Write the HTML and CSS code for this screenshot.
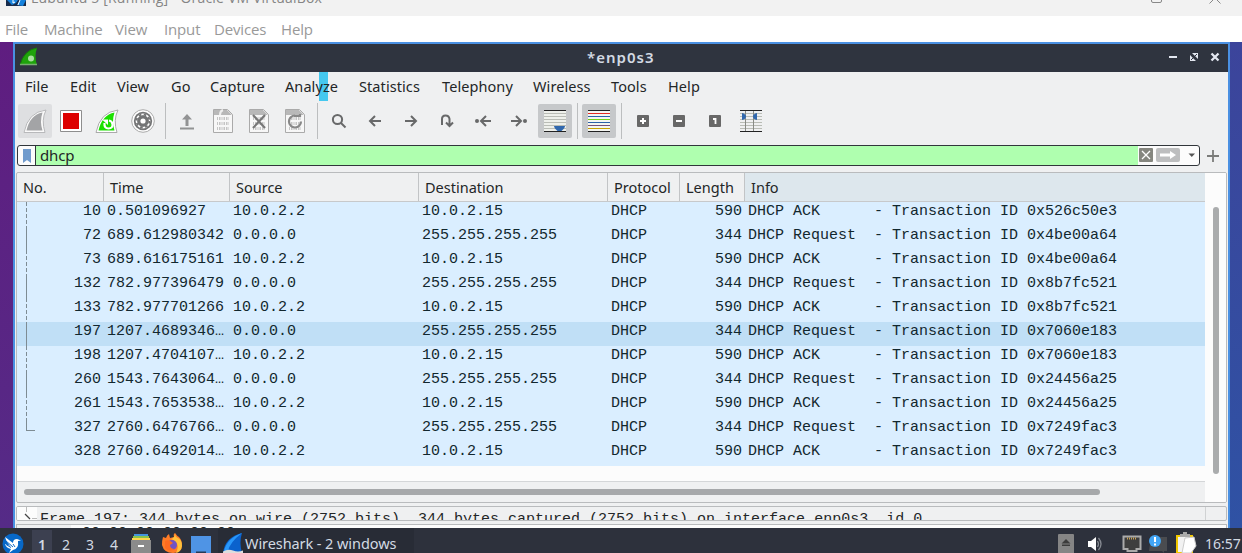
FILE: index.html
```html
<!DOCTYPE html>
<html lang="en">
<head>
<meta charset="utf-8">
<title>Wireshark in VirtualBox</title>
<link rel="stylesheet" href="styles.css">
</head>
<body>
<div class="screen">
  <header class="host-title">
    <svg class="host-logo" width="20" height="7" viewBox="0 0 20 7"><path d="M0 0h20v6H0z" fill="#182c4c"/><path d="M1 0l5 5 4-2 2-3zM11 5l6 1 3-6h-6z" fill="#1683de"/><path d="M7 0v3l2-1M14 0l-2 5" stroke="#fff" fill="none"/></svg>
    <span class="host-name">Lubuntu 5 [Running] - Oracle VM VirtualBox</span>
    <svg class="host-controls" width="92" height="4" viewBox="0 0 92 4" fill="none" stroke="#888"><path d="M1.500 0v1q0 1.500 1.500 1.500h7q1.500 0 1.500-1.500v-1"/><path d="M59.500 3.500l4-4M70.500 3.500l-4-4"/></svg>
  </header>
  <nav class="host-menu"><span>File</span><span>Machine</span><span>View</span><span>Input</span><span>Devices</span><span>Help</span></nav>

  <div class="desktop">
    <section class="window">
      <div class="titlebar">
        <svg class="title-logo" width="20" height="20" viewBox="0 0 20 20"><path d="M1 18Q5 3 18 1q-3 8 0 17z" fill="#1fa30b"/><path d="M1 18Q5 3 18 1" fill="none" stroke="#158007"/><path d="M1 17.500h17" stroke="#77ae70" stroke-width="1.500"/><circle cx="12" cy="11.500" r="3" fill="#a9dea0"/></svg>
        <span class="title-text">*enp0s3</span>
        <svg class="title-controls" width="56" height="12" viewBox="0 0 56 12"><path d="M1 5h8" stroke="#e3e7f0" stroke-width="2"/><path d="M24 1h6v6zM22 3v6h6z" fill="#e3e7f0"/><path d="M23 8l6-6" stroke="#2f343f"/><path d="M43.500 1.500l7 7M50.500 1.500l-7 7" stroke="#e3e7f0" stroke-width="2.300"/></svg>
      </div>
      <nav class="app-menu"><span>File</span><span>Edit</span><span>View</span><span>Go</span><span>Capture</span><span class="analyze">Analyze</span><span>Statistics</span><span>Telephony</span><span>Wireless</span><span>Tools</span><span>Help</span></nav>

      <div class="toolbar">
        <span class="tool faint"><svg width="24" height="24" viewBox="0 0 24 24"><path d="M1 23.500Q5 3 23 1q-5 10-1 22.500z" fill="#fafafa" stroke="#b8b9bb"/><path d="M3.500 21.500Q7 6 19.500 3.500q-3 9 0 18z" fill="#a3a4a6"/></svg></span>
        <span class="tool"><svg width="22" height="22" viewBox="0 0 22 22"><path d="M.5.5h21v21H.5z" fill="#fff" stroke="#8e8e8e"/><path d="M3 3h16v16H3z" fill="#d00"/></svg></span>
        <span class="tool"><svg width="24" height="24" viewBox="0 0 24 24"><path d="M1 23.500Q5 3 23 1q-5 10-1 22.500z" fill="#fff" stroke="#aaa"/><path d="M3.500 21.500Q7 6 19.500 3.500q-3 9 0 18z" fill="#1be000"/><path d="M9.500 14q-.5 5.500 4 5.500t4-4.500q-.5-3-3.500-3.500" fill="none" stroke="#fff" stroke-width="2.200"/><path d="M7 10.500h6v5.500z" fill="#fff"/></svg></span>
        <span class="tool"><svg width="24" height="24" viewBox="0 0 24 24"><circle cx="12" cy="12" r="11.300" fill="#fff" stroke="#aaa"/><circle cx="12" cy="12" r="9.200" fill="#737475"/><circle cx="12" cy="12" r="6.500" fill="none" stroke="#fff" stroke-width="1.800"/><circle cx="12" cy="12" r="6.500" fill="none" stroke="#737475" stroke-width="1.800" stroke-dasharray="2.600 2.505"/><circle cx="12" cy="12" r="4" fill="none" stroke="#737475" stroke-width="3.400"/><circle cx="12" cy="12" r="2.600" fill="#fff"/></svg></span>
        <i class="separator"></i>
        <span class="tool"><svg width="16" height="18" viewBox="0 0 16 18" fill="#929394"><path d="M8 2l5 5.500H9.500V14h-3V7.500H3zM1 15.500h14v2H1z"/></svg></span>
        <span class="tool"><svg class="doc" width="20" height="24" viewBox="0 0 20 24"><path d="M.5.500h14l5 5v18H.5z" fill="#f7f7f7" stroke="#aaa"/><path d="M1 1h13v5H1zM14 1v5h5z" fill="#b8b8b8"/><path d="M7 6q0-4 3-5" stroke="#eee" stroke-width="2" fill="none"/><path d="M4 9.500h12M4 14.500h12M4 19.500h12" stroke="#c5c5c5" stroke-width="3" stroke-dasharray="1 1 1 .5"/></svg></span>
        <span class="tool"><svg class="doc" width="20" height="24" viewBox="0 0 20 24"><path d="M.5.500h14l5 5v18H.5z" fill="#f7f7f7" stroke="#aaa"/><path d="M1 1h13v5H1zM14 1v5h5z" fill="#b8b8b8"/><path d="M4 9.500h12M4 14.500h12M4 19.500h12" stroke="#c5c5c5" stroke-width="3" stroke-dasharray="1 1 1 .5"/><path d="M4 6l12 13M16 6L4 19" stroke="#777" stroke-width="2.200"/></svg></span>
        <span class="tool"><svg class="doc" width="20" height="24" viewBox="0 0 20 24"><path d="M.5.500h14l5 5v18H.5z" fill="#f7f7f7" stroke="#aaa"/><path d="M1 1h13v5H1zM14 1v5h5z" fill="#b8b8b8"/><path d="M4 9.500h12M4 14.500h12M4 19.500h12" stroke="#c5c5c5" stroke-width="3" stroke-dasharray="1 1 1 .5"/><path d="M10 6.500a6 6 0 1 0 6 6M9 7h6v-2" stroke="#888" stroke-width="2.200" fill="none"/></svg></span>
        <i class="separator"></i>
        <span class="tool"><svg width="16" height="16" viewBox="0 0 16 16" fill="none" stroke="#68696a" stroke-width="2"><circle cx="6.500" cy="6.500" r="4.600"/><path d="M10 10l4.500 4.500"/></svg></span>
        <span class="tool"><svg width="16" height="16" viewBox="0 0 16 16" fill="none" stroke="#68696a" stroke-width="2"><path d="M14 8H3M8 3L3 8l5 5"/></svg></span>
        <span class="tool"><svg width="16" height="16" viewBox="0 0 16 16" fill="none" stroke="#68696a" stroke-width="2"><path d="M2 8h11M8 3l5 5-5 5"/></svg></span>
        <span class="tool"><svg width="16" height="16" viewBox="0 0 16 16" fill="none" stroke="#68696a" stroke-width="2"><path d="M3 12V6q0-3.500 3.500-3.500T10.500 6v6M7 9.500l3.500 3.500L14 9.500"/></svg></span>
        <span class="tool"><svg width="18" height="16" viewBox="0 0 18 16" fill="none" stroke="#68696a" stroke-width="2"><path d="M17 8H7M12 3L7 8l5 5"/><circle cx="3" cy="8" r="2" fill="#68696a" stroke="none"/></svg></span>
        <span class="tool"><svg width="18" height="16" viewBox="0 0 18 16" fill="none" stroke="#68696a" stroke-width="2"><path d="M1 8h10M6 3l5 5-5 5"/><circle cx="15" cy="8" r="2" fill="#68696a" stroke="none"/></svg></span>
        <span class="tool pressed"><svg width="22" height="22" viewBox="0 0 22 22"><path d="M0 0h22v22H0z" fill="#eef0eb"/><path d="M0 3.500h22M0 6.500h22M0 9.500h22M0 12.500h22M0 15.500h22M0 18.500h22" stroke="#b9bcb5"/><path d="M0 .5h22M0 21.500h22" stroke="#222"/><path d="M10 16h11q0 2-3.500 5h-4Q10 18 10 16z" fill="#3168ad"/></svg></span>
        <i class="separator"></i>
        <span class="tool pressed"><svg width="22" height="22" viewBox="0 0 22 22"><path d="M0 0h22v22H0z" fill="#f4f5f1"/><path d="M0 .5h22M0 21.500h22" stroke="#222"/><path d="M0 3.500h22" stroke="#e32b23"/><path d="M0 6.500h22M0 12.500h22" stroke="#2b62a8"/><path d="M0 9.500h22" stroke="#73d216"/><path d="M0 15.500h22" stroke="#75507b"/><path d="M0 18.500h22" stroke="#c8a000"/></svg></span>
        <i class="separator"></i>
        <span class="tool"><svg width="12" height="12" viewBox="0 0 12 12"><rect width="12" height="12" rx="1" fill="#686868"/><path d="M3 6h6M6 3v6" stroke="#fff" stroke-width="2"/></svg></span>
        <span class="tool"><svg width="12" height="12" viewBox="0 0 12 12"><rect width="12" height="12" rx="1" fill="#686868"/><path d="M3 6h6" stroke="#fff" stroke-width="2"/></svg></span>
        <span class="tool"><svg width="12" height="12" viewBox="0 0 12 12"><rect width="12" height="12" rx="1" fill="#686868"/><path d="M4 4h2.500v5" fill="none" stroke="#fff" stroke-width="1.800"/></svg></span>
        <span class="tool"><svg width="22" height="22" viewBox="0 0 22 22"><path d="M0 3.500h22M0 6.500h22M0 9.500h22M0 12.500h22M0 15.500h22M0 18.500h22" stroke="#b9bcb5"/><path d="M0 .5h22M0 21.500h22" stroke="#222"/><path d="M5.500 1v20M13.500 1v20" stroke="#888a85"/><path d="M2 3q4 1 4 3.500T2 10zM17 3q-4 1-4 3.500t4 3.500z" fill="#3168ad"/></svg></span>
      </div>

      <div class="filter-row">
        <div class="filter">
          <span class="bookmark"><svg width="8" height="14" viewBox="0 0 8 14"><path d="M0 0h8v14l-4-3-4 3z" fill="#709bcd"/></svg></span>
          <span class="filter-text">dhcp</span>
          <span class="filter-actions"><svg width="62" height="19" viewBox="0 0 62 19"><rect x="1" y="2" width="14" height="14" rx="1" fill="#85867f"/><path d="M4 5l8 8M12 5l-8 8" stroke="#fff" stroke-width="1.300"/><rect x="18" y="2" width="24" height="14" rx="2" fill="#bdbebf"/><path d="M22 7.500h10V5l6 4-6 4v-2.500H22z" fill="#fff"/><path d="M50.500 7.500h6.500l-3.200 3.500z" fill="#555"/></svg></span>
        </div>
        <svg class="plus" width="12" height="12" viewBox="0 0 12 12"><path d="M0 6h12M6 0v12" stroke="#7b7c7a" stroke-width="1.800"/></svg>
      </div>

      <div class="packets">
        <div class="packet-main">
          <div class="head cols"><b>No.</b><b>Time</b><b>Source</b><b>Destination</b><b>Protocol</b><b>Length</b><b class="info-head">Info</b></div>
          <div class="rows">
            <div class="row cols dashed"><span>10</span><span>0.501096927</span><span>10.0.2.2</span><span>10.0.2.15</span><span>DHCP</span><span>590</span><span>DHCP ACK      - Transaction ID 0x526c50e3</span></div>
            <div class="row cols solid"><span>72</span><span>689.612980342</span><span>0.0.0.0</span><span>255.255.255.255</span><span>DHCP</span><span>344</span><span>DHCP Request  - Transaction ID 0x4be00a64</span></div>
            <div class="row cols dashed"><span>73</span><span>689.616175161</span><span>10.0.2.2</span><span>10.0.2.15</span><span>DHCP</span><span>590</span><span>DHCP ACK      - Transaction ID 0x4be00a64</span></div>
            <div class="row cols solid"><span>132</span><span>782.977396479</span><span>0.0.0.0</span><span>255.255.255.255</span><span>DHCP</span><span>344</span><span>DHCP Request  - Transaction ID 0x8b7fc521</span></div>
            <div class="row cols dashed"><span>133</span><span>782.977701266</span><span>10.0.2.2</span><span>10.0.2.15</span><span>DHCP</span><span>590</span><span>DHCP ACK      - Transaction ID 0x8b7fc521</span></div>
            <div class="row cols solid selected"><span>197</span><span>1207.4689346…</span><span>0.0.0.0</span><span>255.255.255.255</span><span>DHCP</span><span>344</span><span>DHCP Request  - Transaction ID 0x7060e183</span></div>
            <div class="row cols dashed"><span>198</span><span>1207.4704107…</span><span>10.0.2.2</span><span>10.0.2.15</span><span>DHCP</span><span>590</span><span>DHCP ACK      - Transaction ID 0x7060e183</span></div>
            <div class="row cols solid"><span>260</span><span>1543.7643064…</span><span>0.0.0.0</span><span>255.255.255.255</span><span>DHCP</span><span>344</span><span>DHCP Request  - Transaction ID 0x24456a25</span></div>
            <div class="row cols dashed"><span>261</span><span>1543.7653538…</span><span>10.0.2.2</span><span>10.0.2.15</span><span>DHCP</span><span>590</span><span>DHCP ACK      - Transaction ID 0x24456a25</span></div>
            <div class="row cols last"><span>327</span><span>2760.6476766…</span><span>0.0.0.0</span><span>255.255.255.255</span><span>DHCP</span><span>344</span><span>DHCP Request  - Transaction ID 0x7249fac3</span></div>
            <div class="row cols"><span>328</span><span>2760.6492014…</span><span>10.0.2.2</span><span>10.0.2.15</span><span>DHCP</span><span>590</span><span>DHCP ACK      - Transaction ID 0x7249fac3</span></div>
          </div>
          <div class="hscroll"><i></i></div>
        </div>
        <div class="vscroll"><i></i></div>
      </div>
      <div class="details"><span class="branch"><svg width="20" height="13" viewBox="0 0 20 13" fill="none"><path d="M9.500 0v5M15 11.500h5" stroke="#bbb"/><path d="M8 7l5 5" stroke="#444" stroke-width="1.300"/></svg></span><span class="frame-text">Frame 197: 344 bytes on wire (2752 bits), 344 bytes captured (2752 bits) on interface enp0s3, id 0</span><i class="details-edge"></i></div>
      <div class="bytes"><span class="offset"></span><span class="hex">00 00 00 00 00 00</span></div>
    </section>
  </div>

  <footer class="taskbar">
    <span class="launcher"><svg width="22" height="22" viewBox="0 0 22 22"><circle cx="11" cy="11" r="10.500" fill="#0768c8"/><path d="M3 4l8 6q0-4 4-4l4 1.500-3 .5q1 8-5 9l-4 3 2-4q-5-1-6-5l5 2q-4-4-5-9z" fill="#fff"/><path d="M4 8l7 6M4 11.500l5 3M11 11l2 3" stroke="#0768c8"/></svg></span>
    <span class="desk active">1</span><span class="desk">2</span><span class="desk">3</span><span class="desk">4</span>
    <span class="quick"><svg width="20" height="19" viewBox="0 0 20 19"><path d="M3 0h14v3H3z" fill="#4394dd"/><path d="M2 2h16v3H2z" fill="#8ac34a"/><path d="M1 4h18v4H1z" fill="#ffd54f"/><rect y="6" width="20" height="14" fill="#8b8b8b"/><path d="M7 12h6" stroke="#fff" stroke-width="2"/></svg></span>
    <span class="quick fox"><svg width="22" height="20" viewBox="0 0 22 20"><path d="M2 4l3 1q1-3 3-4l1 4 4-1q-1-3 1-4 2 3 4 4 3 3 3 8 0 8-9 8T1 12q0-5 1-8z" fill="#ff7b26"/><path d="M14 0q0 4 3 5 4 2 4 8-1 6-6 7 5-10-5-14 4-1 4-6z" fill="#ffc23c"/><circle cx="11" cy="12" r="5" fill="#7053c5"/><path d="M4 8q4-2 8 2l-3 2q0 4 5 4-6 4-10-1z" fill="#ff6b20"/></svg></span>
    <span class="quick show-desktop"><svg width="20" height="17" viewBox="0 0 20 17"><path d="M0 0h20v17H0z" fill="#4f94e5"/><path d="M5 15.500h10V17H5z" fill="#263a56"/></svg></span>
    <span class="task"><svg width="22" height="20" viewBox="0 0 22 20"><path d="M1 20Q3 4 20 0q-3 9 0 20z" fill="#0b62cd"/><path d="M2 18Q5 5 20 0 8 9 6 18z" fill="#2998fa"/><path d="M1 18.500q5-3 10-1t10 0V20H1z" fill="#ddd"/></svg><span class="task-text">Wireshark - 2 windows</span></span>
    <span class="tray"><svg width="146" height="23" viewBox="0 0 146 23"><rect x="4" y="4" width="16" height="20" rx="1" fill="#858585"/><path d="M12 9l4.500 4.500h-9zM8 14.500h8v1.500H8z" fill="#3c3c3c"/><path d="M34 11h3l5-4v14l-5-4h-3z" fill="#fff"/><path d="M43.500 11q2 3 0 6M44.500 8q5 6 0 12" stroke="#858991" fill="none" stroke-width="1.300"/><path d="M69.500 6.500h17V19h-4v2h-9v-2h-4z" fill="#3e3e3e" stroke="#aaa" stroke-width="2"/><path d="M73 8.500h10" stroke="#c8a45b" stroke-width="2" stroke-dasharray="1 1"/><path d="M97 7h16v14h-3v2l-2-2H95z" fill="#4a4c50"/><circle cx="101" cy="11" r="6" fill="#42a5f5"/><path d="M101 7v5M101 13.500v2" stroke="#fff" stroke-width="2"/><path d="M123 6h15v17h-15z" fill="#f2f2f2" stroke="#f2c800" stroke-width="2"/><path d="M126 4h3V2h4v2h3v3h-10z" fill="#aaa"/><path d="M131 8l9-1 2 9-5 7h-9z" fill="#fff" stroke="#ccc"/></svg></span>
    <span class="clock">16:57</span>
  </footer>
</div>
</body>
</html>
```
FILE: styles.css
```css
* { box-sizing: border-box; }
body { margin: 0; width: 1242px; height: 553px; overflow: hidden; font-family: "Noto Sans", sans-serif; }
svg { display: block; flex: none; }
.screen { width: 1242px; height: 553px; overflow: hidden; display: flex; flex-direction: column; }
.host-title { height: 16px; flex: none; background: #f2f2f2; display: flex; align-items: flex-start; padding-left: 6px; overflow: hidden; }
.host-name { font: 14px/20px "Open Sans", sans-serif; color: #858585; margin: -12px 0 0 5px; width: 1120px; letter-spacing: .18px; white-space: nowrap; }
.host-menu { height: 26px; flex: none; background: #fff; display: grid; grid-template-columns: 39px 71px 49px 50px 67px auto; padding-left: 5px; font: 15px/27px "Open Sans", sans-serif; letter-spacing: -.15px; color: #999; }
.desktop { height: 486px; flex: none; padding: 0 12px 0 13px; background: linear-gradient(#5f1d80, #552b87) 0 0 / 50% 100% no-repeat, linear-gradient(#3c449b, #2f52a4) 100% 0 / 50% 100% no-repeat; }
.window { width: 1217px; height: 486px; overflow: hidden; background: #eff0f1; border: solid #4a90e2; border-width: 2px 2px 0; display: flex; flex-direction: column; }
.titlebar { height: 28px; flex: none; background: #2f343f; display: flex; align-items: center; }
.title-logo { margin: -2px 0 0 4px; }
.title-text { width: 1129px; padding-left: 548px; font-size: 15px; font-weight: 600; letter-spacing: 1px; color: #d3dae3; line-height: 24px; margin-top: -3px; }
.app-menu { height: 29px; flex: none; display: grid; grid-template-columns: 45px 47px 54px 39px 75px 74px 83px 91px 78px 57px auto; padding-left: 10px; font-size: 14.500px; line-height: 29px; letter-spacing: .08px; color: #232627; }
.analyze { background: linear-gradient(#45c8ef, #45c8ef) 34px 0 / 9px 29px no-repeat; }
.toolbar { height: 40px; flex: none; display: flex; padding: 3px 0 0 2px; }
.tool { width: 34px; height: 34px; margin: 0 1px; display: flex; align-items: center; justify-content: center; border-radius: 2px; flex: none; }
.faint { background: #dedfe1; }
.pressed { background: #c6c8ca; }
.separator { width: 8px; height: 36px; margin-top: -1px; background: linear-gradient(#bcbebf, #bcbebf) 4px 0 / 1px 36px no-repeat; flex: none; }
.filter-row { height: 31px; flex: none; display: flex; padding: 4px 0 0 2px; }
.filter { width: 1183px; height: 21px; display: flex; border: 1px solid #31363b; border-radius: 3px; background: #fcfcfc; overflow: hidden; }
.bookmark { width: 18px; flex: none; border-right: 1px solid #31363b; display: flex; align-items: center; justify-content: center; }
.filter-text { width: 1102px; flex: none; background: #afffaf; padding-left: 4px; font-size: 15px; line-height: 18px; color: #232627; letter-spacing: -.15px; }
.plus { margin: 5px 0 0 7px; }
.packets { width: 1211px; height: 331px; flex: none; margin-left: 1px; border: 1px solid #b9bbbd; border-radius: 2px; display: flex; overflow: hidden; }
.packet-main { width: 1188px; flex: none; display: flex; flex-direction: column; overflow: hidden; border-right: 0; }
.cols { display: grid; grid-template-columns: 87px 126px 189px 189px 72px 65px 461px; }
.head { height: 29px; flex: none; border-bottom: 1px solid #c7c9cb; font-size: 14.500px; line-height: 28px; color: #232627; }
.head b { font-weight: 400; padding-left: 6px; border-right: 1px solid #c2c4c6; }
.head .info-head { background: #dde7ed; border: 0; }
.rows { height: 279px; flex: none; background: #fcfcfc; overflow: hidden; display: flex; flex-direction: column; }
.row { height: 24px; flex: none; background-color: #daeeff; background-repeat: no-repeat; background-position: 9px 0; font: 15px/19px "Liberation Mono", monospace; color: #12272e; white-space: pre; }
.row span { padding-left: 3px; }
.row span:first-child, .row span:nth-child(6) { text-align: right; padding-right: 3px; }
.solid { background-image: linear-gradient(#7e8c93, #7e8c93); background-size: 1px 24px; }
.dashed { background-image: repeating-linear-gradient(#7e8c93 0 4px, transparent 4px 6px); background-size: 1px 24px; }
.selected { background-color: #c0dff6; }
.last { background-image: linear-gradient(#7e8c93, #7e8c93), linear-gradient(#7e8c93, #7e8c93); background-size: 1px 12px, 9px 1px; background-position: 9px 0, 9px 12px; }
.hscroll { height: 21px; flex: none; border-top: 1px solid #d4d6d8; padding: 7px 0 0 7px; }
.hscroll i { display: block; width: 1076px; height: 6px; border-radius: 3px; background: #a6a8aa; }
.vscroll { width: 21px; background: #fcfcfc; padding: 34px 0 0 8px; }
.vscroll i { display: block; width: 6px; height: 267px; border-radius: 3px; background: #aaacad; }
.details { width: 1211px; height: 15px; margin: 3px 0 0 1px; flex: none; border: 1px solid #b9bbbd; border-radius: 2px; display: flex; overflow: hidden; }
.branch { width: 20px; background: #fcfcfc; margin-right: 3px; }
.frame-text { width: 1165px; font: 15px/26px "Liberation Mono", monospace; color: #232627; white-space: pre; }
.details-edge { width: 1px; background: #d0d2d3; }
.bytes { width: 1211px; height: 15px; margin: 3px 0 0 1px; flex: none; border: 1px solid #b9bbbd; background: #fcfcfc; display: flex; }
.offset { width: 54px; background: #eff0f1; }
.hex { font: 15px/20px "Liberation Mono", monospace; color: #232627; padding-left: 11px; margin-top: -1px; }
.taskbar { height: 25px; flex: none; background: #2d313c; display: flex; overflow: hidden; color: #d3dae3; }
.launcher { width: 32px; padding: 5px 0 0 2px; }
.desk { width: 20px; height: 24px; margin: 2px 4px 0 0; font-size: 14px; line-height: 30px; text-align: center; flex: none; }
.active { background: #3c4050; font-weight: 600; }
.quick { width: 30px; padding: 6px 0 0 3px; flex: none; }
.fox { padding-top: 5px; }
.show-desktop { padding-top: 8px; }
.task { width: 196px; background: #282c36; padding: 5px 0 0 4px; display: flex; flex: none; }
.task-text { font-size: 14.500px; line-height: 21px; margin-left: 1px; letter-spacing: -.08px; white-space: nowrap; }
.tray { margin-left: 640px; padding-top: 2px; width: 151px; flex: none; }
.clock { font-size: 14px; line-height: 31px; }
```
